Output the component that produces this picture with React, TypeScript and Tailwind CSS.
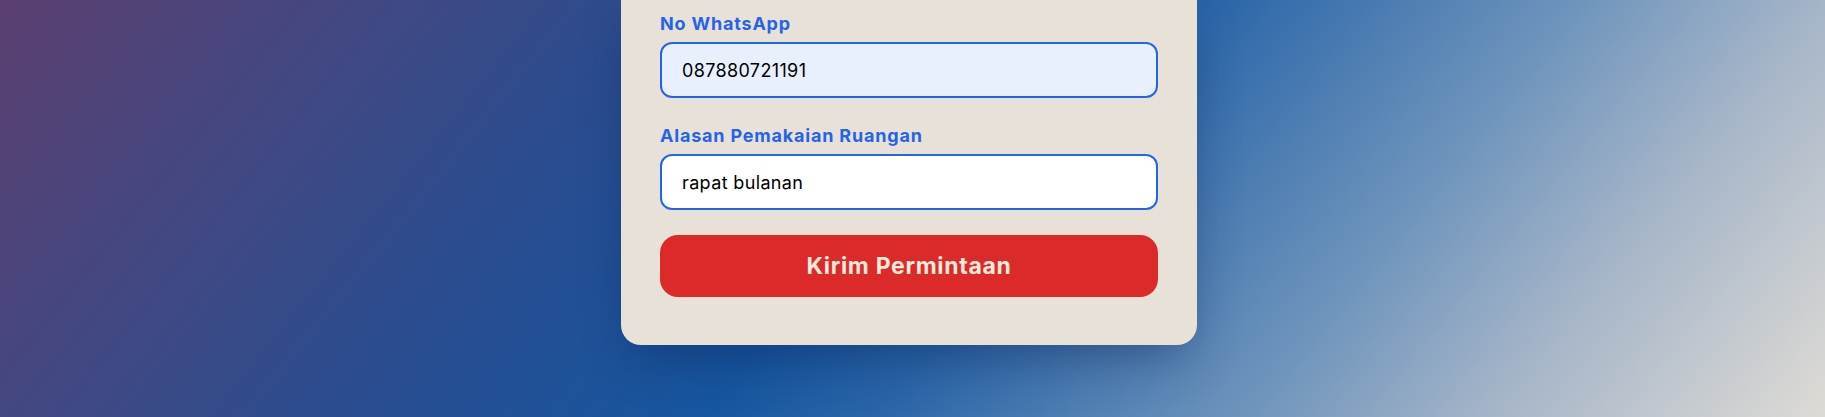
const FONT = "font-['Inter','Noto_Sans',sans-serif]";

function Field({
  label,
  value,
  autofill,
  className = "",
}: {
  label: string;
  value: string;
  autofill?: boolean;
  className?: string;
}) {
  return (
    <div className={`flex flex-col ${className}`}>
      <label className="mb-[6px] text-[18px] leading-[24px] font-bold tracking-[0.045em] text-[#2563eb]">
        {label}
      </label>
      <input
        readOnly
        value={value}
        className={`h-14 w-full rounded-xl border-2 border-[#2563eb] px-5 text-[18px] tracking-[0.02em] text-black outline-none ${
          autofill ? "bg-[#e8f0fe]" : "bg-white"
        }`}
      />
    </div>
  );
}

export default function App() {
  return (
    <div
      className={`${FONT} h-[417px] w-full overflow-hidden bg-[linear-gradient(129deg,#5b3f70_0%,#3d4985_20%,#2c4c8e_30%,#1656a0_48%,#2a65a8_56%,#6e94bc_73%,#a4b4c8_84%,#dedbd5_100%)]`}
    >
      <div className="flex justify-center pr-[7px]">
        <form className="w-[576px] rounded-b-[20px] bg-[#e8e1d7] px-[39px] pt-[12px] pb-12 shadow-[0_20px_50px_-10px_rgba(10,30,80,0.45)]">
          <Field label="No WhatsApp" value="087880721191" autofill />
          <Field
            label="Alasan Pemakaian Ruangan"
            value="rapat bulanan"
            className="mt-[26px]"
          />
          <button
            type="button"
            className="mt-[25px] h-[62px] w-full rounded-[18px] bg-[#dc2a2a] text-[23px] font-bold tracking-[0.03em] text-[#f7ebdc]"
          >
            Kirim Permintaan
          </button>
        </form>
      </div>
    </div>
  );
}
